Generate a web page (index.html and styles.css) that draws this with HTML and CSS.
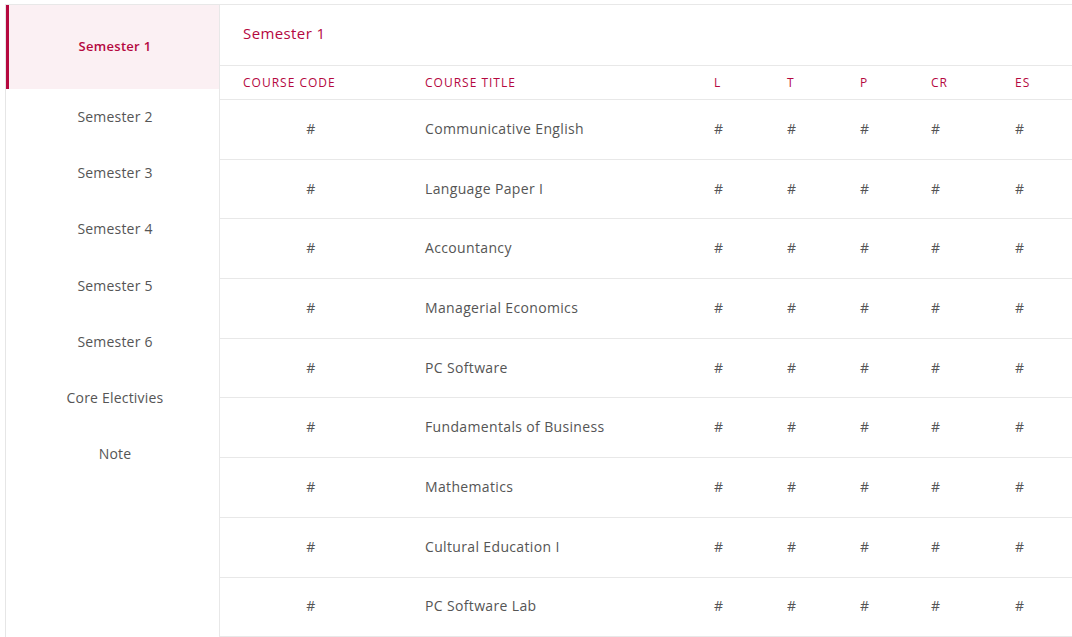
FILE: index.html
```html
<!DOCTYPE html>
<html>
<head>
<meta charset="utf-8">
<link rel="stylesheet" href="styles.css">
</head>
<body>
<div class="wrap">
  <nav class="side">
    <div class="tab active">Semester 1</div>
    <div class="tab">Semester 2</div>
    <div class="tab">Semester 3</div>
    <div class="tab">Semester 4</div>
    <div class="tab">Semester 5</div>
    <div class="tab">Semester 6</div>
    <div class="tab">Core Electivies</div>
    <div class="tab">Note</div>
  </nav>
  <main class="main">
    <h2 class="title">Semester 1</h2>
    <div class="row head">
      <div class="c code">COURSE CODE</div>
      <div class="c">COURSE TITLE</div>
      <div class="c">L</div>
      <div class="c">T</div>
      <div class="c">P</div>
      <div class="c">CR</div>
      <div class="c">ES</div>
    </div>
    <div class="row"><div class="c code">#</div><div class="c">Communicative English</div><div class="c">#</div><div class="c">#</div><div class="c">#</div><div class="c">#</div><div class="c">#</div></div>
    <div class="row"><div class="c code">#</div><div class="c">Language Paper I</div><div class="c">#</div><div class="c">#</div><div class="c">#</div><div class="c">#</div><div class="c">#</div></div>
    <div class="row"><div class="c code">#</div><div class="c">Accountancy</div><div class="c">#</div><div class="c">#</div><div class="c">#</div><div class="c">#</div><div class="c">#</div></div>
    <div class="row"><div class="c code">#</div><div class="c">Managerial Economics</div><div class="c">#</div><div class="c">#</div><div class="c">#</div><div class="c">#</div><div class="c">#</div></div>
    <div class="row"><div class="c code">#</div><div class="c">PC Software</div><div class="c">#</div><div class="c">#</div><div class="c">#</div><div class="c">#</div><div class="c">#</div></div>
    <div class="row"><div class="c code">#</div><div class="c">Fundamentals of Business</div><div class="c">#</div><div class="c">#</div><div class="c">#</div><div class="c">#</div><div class="c">#</div></div>
    <div class="row"><div class="c code">#</div><div class="c">Mathematics</div><div class="c">#</div><div class="c">#</div><div class="c">#</div><div class="c">#</div><div class="c">#</div></div>
    <div class="row"><div class="c code">#</div><div class="c">Cultural Education I</div><div class="c">#</div><div class="c">#</div><div class="c">#</div><div class="c">#</div><div class="c">#</div></div>
    <div class="row"><div class="c code">#</div><div class="c">PC Software Lab</div><div class="c">#</div><div class="c">#</div><div class="c">#</div><div class="c">#</div><div class="c">#</div></div>
  </main>
</div>
</body>
</html>
```

FILE: styles.css
```css
* { box-sizing: border-box; }
html, body { margin: 0; padding: 0; background: #fff; overflow: hidden; }
body {
  font-family: "Open Sans", "Liberation Sans", sans-serif;
  color: #555;
  padding: 4px 0 0 5px;
}
.wrap {
  display: flex;
  border-top: 1px solid #e8e8e8;
  border-left: 1px solid #e6e6e6;
  height: 700px;
}
.side {
  width: 214px;
  flex: none;
  border-right: 1px solid #e8e8e8;
  display: flex;
  flex-direction: column;
}
.tab {
  height: 56.2px;
  flex: none;
  display: flex;
  align-items: center;
  justify-content: center;
  padding-left: 5px;
  padding-bottom: 1px;
  font-size: 14px;
  letter-spacing: 0.2px;
  color: #555;
}
.tab.active {
  height: 84px;
  background: #fbf0f3;
  border-left: 3px solid #b5083f;
  padding-left: 2px;
  padding-bottom: 2px;
  color: #b5083f;
  font-size: 13px;
  font-weight: 600;
  letter-spacing: 0.3px;
}
.main { flex: 1; }
.title {
  margin: 0;
  height: 61px;
  display: flex;
  align-items: center;
  padding-left: 23px;
  padding-bottom: 4px;
  font-size: 15px;
  font-weight: 400;
  letter-spacing: 0.4px;
  color: #b5083f;
  border-bottom: 1px solid #e8e8e8;
}
.row {
  display: grid;
  grid-template-columns: 182px 289px 73px 73px 71px 84px 80px;
  height: 59.7px;
  align-items: center;
  padding-bottom: 2px;
  border-bottom: 1px solid #e8e8e8;
  font-size: 14px;
  letter-spacing: 0.35px;
}
.row.head {
  height: 34px;
  padding-bottom: 0;
  font-size: 12px;
  font-weight: 500;
  letter-spacing: 1px;
  color: #b5083f;
}
.c { padding-left: 23px; }
.row:not(.head) .c.code { padding-left: 0; text-align: center; }
```
